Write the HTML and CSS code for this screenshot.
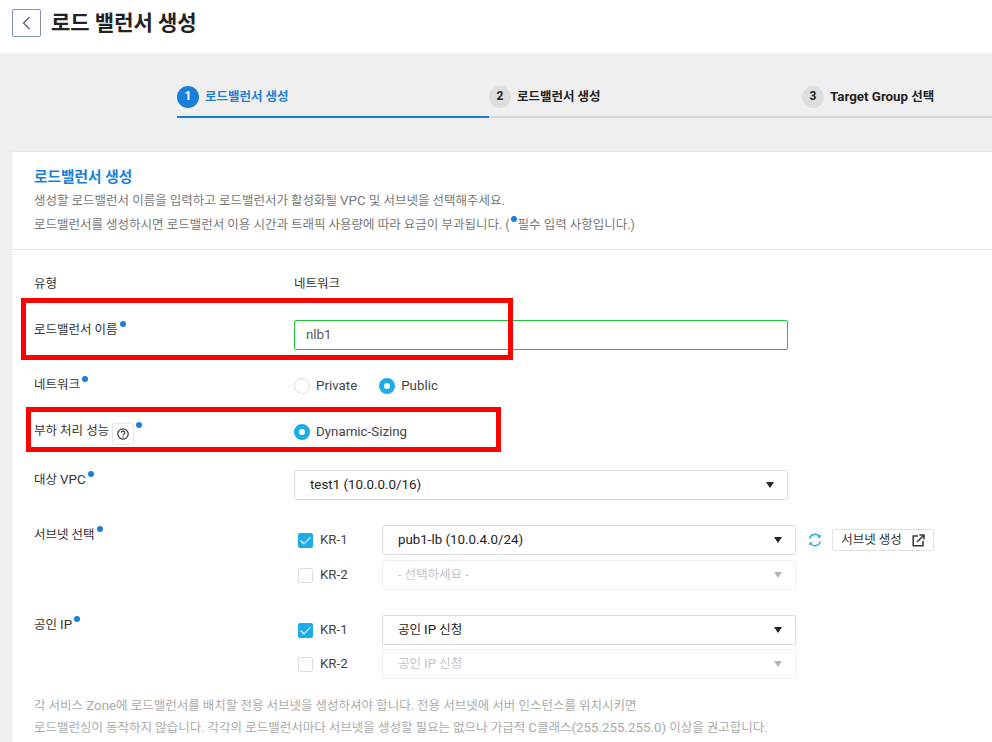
FILE: index.html
```html
<!DOCTYPE html>
<html lang="ko">
<head>
<meta charset="utf-8">
<title>로드 밸런서 생성</title>
<link rel="stylesheet" href="styles.css">
</head>
<body>
<header class="page-head">
  <button class="back" type="button" aria-label="뒤로"><svg width="9" height="14" viewBox="0 0 9 14"><path d="M7.5 1 1.5 7l6 6" fill="none" stroke="#4a5a6e" stroke-width="1.2"/></svg></button>
  <h1>로드 밸런서 생성</h1>
</header>
<main class="content">
  <ol class="stepper">
    <li class="step active"><span class="num">1</span><span>로드밸런서 생성</span></li>
    <li class="step"><span class="num">2</span><span>로드밸런서 생성</span></li>
    <li class="step"><span class="num">3</span><span><span class="en">Target Group</span> 선택</span></li>
  </ol>
  <section class="card">
    <div class="card-head">
      <h2>로드밸런서 생성</h2>
      <p>생성할 로드밸런서 이름을 입력하고 로드밸런서가 활성화될 <span class="en">VPC</span> 및 서브넷을 선택해주세요.</p>
      <p>로드밸런서를 생성하시면 로드밸런서 이용 시간과 트래픽 사용량에 따라 요금이 부과됩니다. (<i class="dot inline"></i>필수 입력 사항입니다.)</p>
    </div>
    <div class="form">
      <div class="row row-type">
        <div class="label">유형</div>
        <div class="value plain">네트워크</div>
      </div>
      <div class="row row-name">
        <div class="label">로드밸런서 이름<i class="dot"></i></div>
        <div class="value"><div class="input en">nlb1</div></div>
      </div>
      <div class="row row-net">
        <div class="label">네트워크<i class="dot"></i></div>
        <div class="value radios">
          <span class="radio en"><i class="rd"></i>Private</span>
          <span class="radio en"><i class="rd on"></i>Public</span>
        </div>
      </div>
      <div class="row row-perf">
        <div class="label">부하 처리 성능<span class="help"><svg width="14" height="14" viewBox="0 0 14 14"><circle cx="7" cy="7" r="5.2" fill="none" stroke="#333" stroke-width="1.2"/><path d="M5.3 5.8c0-2.2 3.5-2.2 3.5 0 0 1.3-1.7 1.2-1.8 2.6" fill="none" stroke="#333" stroke-width="1.1"/><circle cx="7" cy="10" r=".7" fill="#333"/></svg></span><i class="dot"></i></div>
        <div class="value radios"><span class="radio en"><i class="rd on"></i>Dynamic-Sizing</span></div>
      </div>
      <div class="row row-vpc">
        <div class="label">대상 <span class="en">VPC</span><i class="dot"></i></div>
        <div class="value"><div class="select wide en">test1 (10.0.0.0/16)<i class="caret"></i></div></div>
      </div>
      <div class="row row-subnet">
        <div class="label">서브넷 선택<i class="dot"></i></div>
        <div class="value stack">
          <div class="zone">
            <span class="check on"><svg width="15" height="15" viewBox="0 0 15 15"><path d="M2.5 7.5 6 11l6.5-7" fill="none" stroke="#fff" stroke-width="1.1"/></svg></span><span class="zone-name en">KR-1</span>
            <div class="select en">pub1-lb (10.0.4.0/24)<i class="caret"></i></div>
            <svg class="refresh" width="14" height="14" viewBox="0 0 14 14"><path d="M1.6 5.6A5.6 5.6 0 0 1 11.4 3.4M12.4 8.4A5.6 5.6 0 0 1 2.6 10.6" fill="none" stroke="#29abe8" stroke-width="1.4"/><path d="M12.7 1.2v3.6H9.1zM1.3 12.8V9.2h3.6z" fill="#29abe8"/></svg>
            <button class="mini" type="button">서브넷 생성<svg width="13" height="13" viewBox="0 0 13 13"><path d="M6 2H1.2v9.8H11V7" fill="none" stroke="#333" stroke-width="1.5"/><path d="M5 8 11 2M7.4 1h4.6v4.6" fill="none" stroke="#333" stroke-width="1.5"/></svg></button>
          </div>
          <div class="zone">
            <span class="check"></span><span class="zone-name en">KR-2</span>
            <div class="select off">- 선택하세요 -<i class="caret"></i></div>
          </div>
        </div>
      </div>
      <div class="row row-ip">
        <div class="label">공인 <span class="en">IP</span><i class="dot"></i></div>
        <div class="value stack tight">
          <div class="zone">
            <span class="check on"><svg width="15" height="15" viewBox="0 0 15 15"><path d="M2.5 7.5 6 11l6.5-7" fill="none" stroke="#fff" stroke-width="1.1"/></svg></span><span class="zone-name en">KR-1</span>
            <div class="select">공인 <span class="en">IP</span> 신청<i class="caret"></i></div>
          </div>
          <div class="zone">
            <span class="check"></span><span class="zone-name en">KR-2</span>
            <div class="select off">공인 <span class="en">IP</span> 신청<i class="caret"></i></div>
          </div>
        </div>
      </div>
      <div class="notes">
        <p>각 서비스 <span class="en">Zone</span>에 로드밸런서를 배치할 전용 서브넷을 생성하셔야 합니다. 전용 서브넷에 서버 인스턴스를 위치시키면</p>
        <p>로드밸런싱이 동작하지 않습니다. 각각의 로드밸런서마다 서브넷을 생성할 필요는 없으나 가급적 <span class="en">C</span>클래스<span class="en">(255.255.255.0)</span> 이상을 권고합니다.</p>
      </div>
    </div>
  </section>
</main>
<div class="mark mark-name"></div>
<div class="mark mark-perf"></div>
</body>
</html>
```
FILE: styles.css
```css
* { box-sizing: border-box; }
html, body { margin: 0; height: 100%; overflow: hidden; }
body {
  position: relative;
  width: 992px;
  height: 742px;
  background: #efefef;
  color: #333;
  font: 12.5px/20px Roboto, "Noto Sans CJK KR", sans-serif;
}
p, h1, h2, ol { margin: 0; padding: 0; }
i { font-style: normal; display: inline-block; }
.en { font-size: 13.33px; }

.page-head {
  height: 53px;
  background: #fff;
  display: flex;
  align-items: center;
  padding: 0 0 8px 12px;
  gap: 10px;
}
.back {
  width: 29px;
  height: 28px;
  padding: 0;
  background: #fff;
  border: 1px solid #8096b0;
  border-radius: 2px;
  display: flex;
  align-items: center;
  justify-content: center;
}
h1 { font-size: 21px; line-height: 28px; font-weight: 700; color: #222; }

.content { padding: 32px 0 0 11px; width: 1400px; }
.stepper {
  list-style: none;
  display: flex;
  margin-left: 166px;
  height: 33px;
  font-weight: 700;
}
.step {
  flex: none;
  width: 312px;
  display: flex;
  gap: 6px;
  height: 33px;
  padding: 1px 0 8px;
  align-items: center;
  border-bottom: 2px solid #d9d9d9;
  color: #222;
}
.step:nth-child(2) { width: 313px; }
.step:last-child { width: 590px; }
.num {
  width: 22px;
  height: 22px;
  border-radius: 50%;
  background: #dedede;
  font-size: 12px;
  line-height: 20px;
  text-align: center;
}
.step.active { color: #1f7fd4; border-color: #1a7fd8; }
.active .num { background: #1a7fd8; color: #fff; }

.card {
  margin-top: 33px;
  background: #fff;
  border: 1px solid #e9e9e9;
  height: 700px;
}
.card-head {
  height: 98px;
  padding: 15px 22px 0;
  border-bottom: 1px solid #e4e4e4;
  color: #777;
}
.card-head p { line-height: 24px; }
h2 { font-size: 14.7px; line-height: 20px; font-weight: 700; color: #1a7fd8; margin-bottom: 2px; }
.dot {
  width: 6px;
  height: 6px;
  border-radius: 50%;
  background: #1a7fd8;
  margin-left: 2px;
  vertical-align: 7px;
}
.dot.inline { margin: 0 1px 0 1px; }

.form { padding: 24px 22px 0; width: 958px; }
.row { display: flex; }
.label { width: 260px; flex: none; }
.value { flex: 1; }
.row-type { height: 20px; }
.row-name { margin-top: 26px; height: 30px; }
.row-net { margin-top: 25px; height: 20px; }
.row-perf { margin-top: 26px; height: 20px; }
.row-vpc { margin-top: 29px; }
.row-subnet { margin-top: 25px; }
.row-ip { margin-top: 25px; }
.radios { padding-top: 1px; }

.input, .select {
  height: 30px;
  border: 1px solid #ddd;
  border-radius: 2px;
  line-height: 28px;
  padding-left: 15px;
  color: #222;
  position: relative;
  background: #fff;
}
.input {
  width: 494px;
  border-color: #19c43a;
  padding-left: 11px;
  color: #555;
}
.select.wide { width: 494px; }
.caret {
  position: absolute;
  right: 13px;
  top: 11px;
  width: 0;
  height: 0;
  border: 4.5px solid transparent;
  border-top: 6px solid #222;
  border-bottom: 0;
}
.select.off { border-color: #f0f0f0; color: #c4c4c4; }
.select.off .caret { border-top-color: #b5b5b5; }

.radios { display: flex; gap: 22px; height: 20px; }
.radio { display: flex; align-items: center; gap: 6px; color: #444; }
.rd {
  width: 16px;
  height: 16px;
  border: 1px solid #ddd;
  border-radius: 50%;
  background: #fff;
}
.rd.on { border: 5px solid #1cace8; }
.help {
  display: inline-flex;
  align-items: center;
  justify-content: center;
  width: 22px;
  height: 22px;
  margin-left: 3px;
  border: 1px solid #e6e6e6;
  border-radius: 2px;
  vertical-align: -6px;
}

.stack { display: flex; flex-direction: column; gap: 5px; }
.stack.tight { gap: 4px; }
.zone { display: flex; align-items: center; height: 30px; padding-left: 4px; }
.check {
  width: 15px;
  height: 15px;
  border: 1px solid #ddd;
  border-radius: 2px;
  background: #fff;
  flex: none;
}
.check.on { border: 0; background: #1cace8; }
.check svg { display: block; }
.zone-name { width: 69px; flex: none; padding-left: 7px; color: #444; }
.zone .select { width: 414px; flex: none; }
.refresh { margin-left: 12px; flex: none; }
.mini {
  margin-left: 10px;
  width: 102px;
  height: 22px;
  padding: 0;
  font: inherit;
  color: #333;
  background: #fff;
  border: 1px solid #e0e0e0;
  border-radius: 2px;
  display: flex;
  align-items: center;
  justify-content: center;
  gap: 10px;
}

.notes { margin-top: 16px; color: #aaa; }
.notes p { line-height: 22px; }

.mark { position: absolute; border: 5px solid #f00; }
.mark-name { left: 21px; top: 298px; width: 492px; height: 62px; }
.mark-perf { left: 26px; top: 407px; width: 475px; height: 45px; }
```
